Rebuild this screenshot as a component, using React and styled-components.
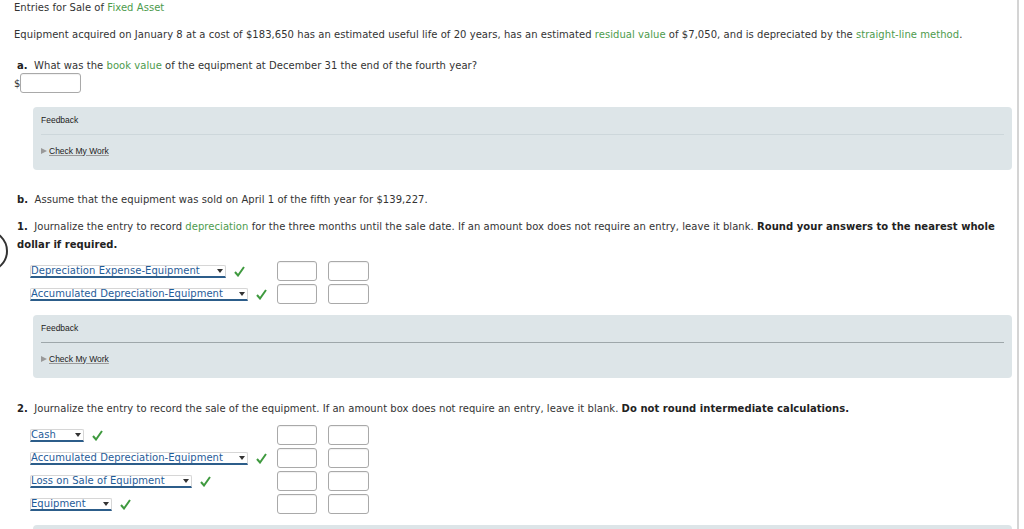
import React from "react"
import styled, { createGlobalStyle } from "styled-components"

const GlobalStyle = createGlobalStyle`
  html, body {
    margin: 0;
    padding: 0;
    background: #fff;
  }
  body {
    font-family: "DejaVu Sans", Verdana, sans-serif;
    font-size: 10px;
    letter-spacing: 0.05px;
    color: #333;
  }
`

const Page = styled.div`
  position: relative;
  width: 1019px;
  height: 529px;
  border-right: 2px solid #d4d4d4;
  box-sizing: border-box;
  overflow: hidden;
`

const Title = styled.div`
  padding: 1px 0 0 14px;
  line-height: 14px;
`

const Para = styled.p`
  margin: 0;
  padding-left: ${(p) => p.$indent || 14}px;
  line-height: 18px;
  margin-top: ${(p) => p.$top || 0}px;
  padding-right: 20px;
`

const Green = styled.span`
  color: #4d9b4d;
`

const Bold = styled.b`
  font-weight: bold;
  color: #222;
`

const DollarRow = styled.div`
  display: flex;
  align-items: center;
  padding-left: 14px;
  margin-top: -2px;
`

const Amount = styled.div`
  width: ${(p) => p.$w || 40}px;
  height: 20px;
  border: 1px solid #a9a9a9;
  border-radius: 3px;
  box-sizing: border-box;
  background: #fff;
  box-shadow: inset 0 1px 1px rgba(0, 0, 0, 0.06);
`

const Feedback = styled.div`
  margin: ${(p) => p.$top}px 5px 0 33px;
  background: #dde5e8;
  border-radius: 4px;
  height: ${(p) => p.$h || 63}px;
  padding: 0 8px;
  font-family: "Liberation Sans", Arial, sans-serif;
  font-size: 8.5px;
  letter-spacing: 0;
  color: #222;
  box-sizing: border-box;
`

const FeedbackHead = styled.div`
  height: 27px;
  line-height: 27px;
  border-bottom: 1px solid ${(p) => (p.$dark ? "#9ea7aa" : "#cdd7db")};
`

const CheckWork = styled.div`
  display: flex;
  align-items: center;
  height: 31px;
  &::before {
    content: "";
    border-left: 6px solid #999;
    border-top: 3.5px solid transparent;
    border-bottom: 3.5px solid transparent;
    margin-right: 2px;
  }
  span {
    text-decoration: underline;
    text-decoration-color: #999;
  }
`

const Entries = styled.div`
  display: flex;
  flex-direction: column;
  gap: 3px;
  padding-left: 30px;
  margin-top: ${(p) => p.$top}px;
`

const EntryRow = styled.div`
  display: flex;
  align-items: center;
  height: 20px;
`

const AccountCell = styled.div`
  width: 247px;
  display: flex;
  align-items: center;
  gap: 8px;
`

const Select = styled.div`
  width: ${(p) => p.$w}px;
  height: 13px;
  box-sizing: border-box;
  display: flex;
  align-items: center;
  justify-content: space-between;
  border: 1px solid #d6d6d6;
  border-bottom: 2px solid #2c5d8a;
  border-radius: 2px 2px 0 0;
  color: #1f5c99;
  line-height: 11px;
  padding-right: 2px;
  &::after {
    content: "";
    border-top: 4px solid #333;
    border-left: 3px solid transparent;
    border-right: 3px solid transparent;
  }
`

const Check = styled.svg`
  width: 11px;
  height: 11px;
  flex: none;
`

const Amounts = styled.div`
  display: flex;
  gap: 11px;
`

const Ring = styled.div`
  position: absolute;
  left: -34px;
  top: 230px;
  width: 38px;
  height: 38px;
  border: 2px solid #333;
  border-radius: 50%;
`

function Tick() {
  return (
    <Check viewBox="0 0 11 11">
      <path d="M1 6 L4 9.5 L10 1" fill="none" stroke="#3f9a3f" strokeWidth="2" />
    </Check>
  )
}

function Entry({ name, w }) {
  return (
    <EntryRow>
      <AccountCell>
        <Select $w={w}>{name}</Select>
        <Tick />
      </AccountCell>
      <Amounts>
        <Amount $w={40} />
        <Amount $w={41} />
      </Amounts>
    </EntryRow>
  )
}

function FeedbackBox({ top, dark }) {
  return (
    <Feedback $top={top}>
      <FeedbackHead $dark={dark}>Feedback</FeedbackHead>
      <CheckWork>
        <span>Check My Work</span>
      </CheckWork>
    </Feedback>
  )
}

export default function App() {
  return (
    <Page>
      <GlobalStyle />
      <Ring />
      <Title>
        Entries for Sale of <Green>Fixed Asset</Green>
      </Title>
      <Para $top={11}>
        Equipment acquired on January 8 at a cost of $183,650 has an estimated useful life of 20 years, has an
        estimated <Green>residual value</Green> of $7,050, and is depreciated by the{" "}
        <Green>straight-line method</Green>.
      </Para>
      <Para $top={13} $indent={17}>
        <Bold>a.</Bold>&nbsp; What was the <Green>book value</Green> of the equipment at December 31 the end of the
        fourth year?
      </Para>
      <DollarRow>
        $<Amount $w={61} />
      </DollarRow>
      <FeedbackBox top={14} />
      <Para $top={21} $indent={17}>
        <Bold>b.</Bold>&nbsp; Assume that the equipment was sold on April 1 of the fifth year for $139,227.
      </Para>
      <Para $top={9} $indent={17}>
        <Bold>1.</Bold>&nbsp; Journalize the entry to record <Green>depreciation</Green> for the three months until the
        sale date. If an amount box does not require an entry, leave it blank.{" "}
        <Bold>Round your answers to the nearest whole dollar if required.</Bold>
      </Para>
      <Entries $top={7}>
        <Entry name="Depreciation Expense-Equipment" w={196} />
        <Entry name="Accumulated Depreciation-Equipment" w={218} />
      </Entries>
      <FeedbackBox top={11} dark />
      <Para $top={22} $indent={17}>
        <Bold>2.</Bold>&nbsp; Journalize the entry to record the sale of the equipment. If an amount box does not
        require an entry, leave it blank. <Bold>Do not round intermediate calculations.</Bold>
      </Para>
      <Entries $top={7}>
        <Entry name="Cash" w={54} />
        <Entry name="Accumulated Depreciation-Equipment" w={218} />
        <Entry name="Loss on Sale of Equipment" w={162} />
        <Entry name="Equipment" w={82} />
      </Entries>
      <Feedback $top={11} $h={40} />
    </Page>
  )
}
